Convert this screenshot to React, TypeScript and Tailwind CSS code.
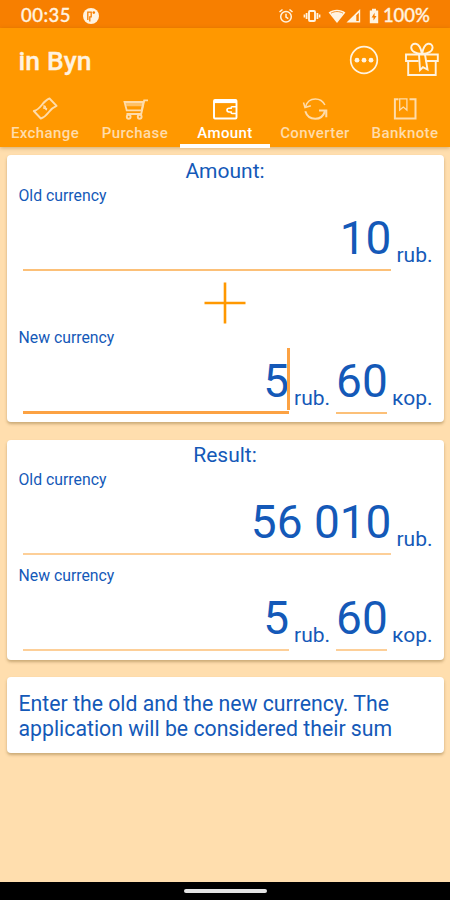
import clsx from 'clsx'
import { ReactNode } from 'react'

const AlarmIcon = () => (
  <svg className="h-4 w-4" viewBox="0 0 16 16" fill="none" stroke="currentColor" strokeWidth="1.5">
    <circle cx="8" cy="8.8" r="5.3" />
    <path d="M8 5.8v3.4l2.3 1.4M1.5 4l3-2.5M14.5 4l-3-2.5" />
  </svg>
)

const VibrationIcon = () => (
  <svg className="h-4 w-[18px]" viewBox="0 0 18 16" fill="none" stroke="currentColor">
    <rect x="6" y="3" width="6" height="10" rx="1" strokeWidth="1.9" />
    <path d="M3.6 5v6M14.4 5v6" strokeWidth="1.8" />
    <path d="M1.4 6.5v3M16.6 6.5v3" strokeWidth="1.6" />
  </svg>
)

const WifiIcon = () => (
  <svg className="h-4 w-[18px]" viewBox="0 0 18 16" fill="currentColor">
    <path d="M9 15 .6 4.6C5.5.8 12.5.8 17.4 4.6Z" />
    <path d="M3 5.2c4-2.2 8-2.2 12 0" stroke="#f77f00" strokeWidth="0.8" fill="none" />
  </svg>
)

const SignalIcon = () => (
  <svg className="h-4 w-[15px]" viewBox="0 0 15 16">
    <path d="M.5 14.5 14.2 1v13.5Z" fill="currentColor" />
    <path d="M10.3 7.2 12.8 4.7v8.4h-2.5Z" fill="#f77f00" />
  </svg>
)

const BatteryIcon = () => (
  <svg className="h-4 w-[10px]" viewBox="0 0 10 16">
    <path d="M3 .8h4v1.6h2.2v12.8H.8V2.4H3Z" fill="currentColor" />
    <path d="M5.6 4.8 2.6 9.4h1.9v3.2l3-4.6H5.6Z" fill="#f77f00" />
  </svg>
)

const AppBadgeIcon = () => (
  <svg className="h-4 w-4" viewBox="0 0 16 16">
    <circle cx="8" cy="8" r="8" fill="currentColor" />
    <path d="M4.8 12V4.2h3.4v4.600H6.800v4.600" stroke="#f77f00" strokeWidth="1.3" fill="none" />
    <circle cx="10.8" cy="4.6" r="1.3" fill="#f77f00" />
  </svg>
)

const MoreIcon = () => (
  <svg className="h-[30px] w-[30px]" viewBox="0 0 30 30" fill="none" stroke="currentColor">
    <circle cx="15" cy="15" r="13.3" strokeWidth="1.7" />
    <g fill="currentColor" stroke="none">
      <circle cx="8" cy="15.2" r="2.4" />
      <circle cx="15" cy="15.2" r="2.4" />
      <circle cx="22" cy="15.2" r="2.4" />
    </g>
  </svg>
)

const GiftIcon = () => (
  <svg
    className="h-[36px] w-[36px]"
    viewBox="0 0 36 36"
    fill="none"
    stroke="currentColor"
    strokeWidth="1.9"
  >
    <path d="M14.6 19H2v-6.5h31.8V19H21.5" />
    <path d="M4.2 19v14h27.5V19" />
    <path d="M18 12C12 11.8 7.2 9.4 7.2 5.6 7.2 2.8 9.4 1.4 11.7 1.8 15 2.4 17 6.5 18 12Z" />
    <path d="M18 12c6-.2 10.6-2.6 10.6-6.4 0-2.8-2.2-4.2-4.5-3.8C21 2.4 19 6.5 18 12Z" />
    <path d="m15 12.5 1 15.7 3-3 4.5 2.3-2.5-15" />
  </svg>
)

const BillIcon = () => (
  <svg className="h-[26px] w-[28px]" viewBox="0 0 28 26" fill="none" stroke="currentColor">
    <path
      d="M2.8 15C6 14.4 8.4 12 10.8 9 13 6.200 15.200 3.700 18.5 2.5L25.600 9.800c-3.600 1.400-5.700 3.500-7.900 6.400-2.300 3-4.600 5.300-7.900 6.300Z"
      strokeWidth="1.900"
      strokeLinejoin="round"
    />
    <path d="M12.300 10.300c1-.4 2 0 2.100 1.200.1 1.300.5 2 1.600 2.200M12.100 11.700l4 1.300" strokeWidth="1.600" />
  </svg>
)

const CartIcon = () => (
  <svg className="h-[26px] w-[28px]" viewBox="0 0 28 26" fill="none" stroke="currentColor">
    <path d="M27 4.4h-3.8L20.2 18H5.5" strokeWidth="1.9" />
    <path d="M22.5 6H3.5l2.2 8.3h15Z" strokeWidth="1.8" />
    <path d="M4 6.5h18l-.9 3.8H5Z" fill="currentColor" fillOpacity="0.6" stroke="none" />
    <circle cx="7.7" cy="20.8" r="1.9" strokeWidth="1.9" />
    <circle cx="18.7" cy="20.8" r="1.9" strokeWidth="1.9" />
  </svg>
)

const WalletIcon = () => (
  <svg className="h-[26px] w-[28px]" viewBox="0 0 28 26" fill="none" stroke="currentColor">
    <rect x="3" y="4" width="22.5" height="18.5" rx="1" strokeWidth="1.9" />
    <path d="M3 6h22.500" strokeWidth="2.2" />
    <path
      d="M25.500 10.800H21c-.7 0-.9.5-.9 1.400H18c-1.400 0-2 .8-2 1.900s.6 1.900 2 1.900h2.100c0 1 .2 1.500.9 1.500h4.500"
      strokeWidth="1.600"
    />
  </svg>
)

const SyncIcon = () => (
  <svg className="h-[26px] w-[28px]" viewBox="0 0 28 26" fill="none" stroke="currentColor">
    <path d="M4.5 11C5.7 6 9.5 3 14.4 3c4.2 0 7.6 2.2 9.5 6" strokeWidth="1.5" />
    <path d="M2.5 6.5 4 11.5l5.800-1.700" strokeWidth="1.5" />
    <path d="M4.3 15.3c1.5 4.9 5.4 7.5 10 7.5 4.7 0 8.2-2.8 9.7-7.7" strokeWidth="2" />
    <path d="M18 14.500h7.300v6.700" strokeWidth="2" />
  </svg>
)

const BookIcon = () => (
  <svg className="h-[26px] w-[28px]" viewBox="0 0 28 26" fill="none" stroke="currentColor">
    <path d="M7.5 3.3H3.9v19.3h20.6V3.3h-6" strokeWidth="2" />
    <path d="M8.7 2.8V14l3.6-3 3.6 3V2.8Z" strokeWidth="1.3" />
  </svg>
)

const tabs = [
  { label: 'Exchange', icon: <BillIcon /> },
  { label: 'Purchase', icon: <CartIcon /> },
  { label: 'Amount', icon: <WalletIcon />, active: true },
  { label: 'Converter', icon: <SyncIcon /> },
  { label: 'Banknote', icon: <BookIcon /> },
]

type CardProps = {
  children: ReactNode
  className?: string
}

const Card = ({ children, className }: CardProps) => (
  <section
    className={clsx('rounded-[4px] bg-white shadow-[0_2px_3px_rgba(90,60,0,0.32)]', className)}
  >
    {children}
  </section>
)

const CardTitle = ({ children }: { children: ReactNode }) => (
  <h2 className="h-8 text-center text-[21px] leading-8">{children}</h2>
)

const Label = ({ children }: { children: ReactNode }) => (
  <div className="h-[18px] pl-3 text-[15.8px] leading-[18px]">{children}</div>
)

type FieldProps = {
  value: string
  unit: string
  small?: boolean
  focused?: boolean
  variant?: 'input' | 'output'
}

const Field = ({ value, unit, small, focused, variant = 'input' }: FieldProps) => (
  <div className={clsx('flex items-end', small ? 'ml-[6px]' : 'flex-1')}>
    <div
      className={clsx(
        'relative h-[66px] text-right text-[46px] leading-[66px] whitespace-nowrap',
        small ? 'w-[51px]' : 'flex-1',
        focused
          ? 'border-b-[3px] border-[#fca243]'
          : variant === 'output'
            ? 'border-b-2 border-[#fdcf98]'
            : 'border-b-2 border-[#fcc078]'
      )}
    >
      {value}
      {focused && <span className="absolute top-0 right-[-1px] h-[62px] w-[3px] bg-[#fca243]" />}
    </div>
    <span className="ml-[5px] text-[21px] leading-8">{unit}</span>
  </div>
)

export default function App() {
  return (
    <div className="flex h-[900px] w-[450px] flex-col overflow-hidden bg-[#ffdeae] font-['Roboto',sans-serif] text-[#1459b8]">
      <div className="flex h-7 shrink-0 items-center bg-[#f77f00] pt-[3px] pr-[20px] pl-[21px] font-['Lato',sans-serif] text-[18.5px] font-medium text-[#fff3e0]">
        <span className="tracking-[0.5px] [-webkit-text-stroke:0.3px_currentColor]">00:35</span>
        <span className="ml-[12px]">
          <AppBadgeIcon />
        </span>
        <div className="ml-auto flex items-center">
          <AlarmIcon />
          <span className="ml-[9px]">
            <VibrationIcon />
          </span>
          <span className="ml-[7px]">
            <WifiIcon />
          </span>
          <SignalIcon />
          <span className="ml-[8px]">
            <BatteryIcon />
          </span>
          <span className="ml-[4px] [-webkit-text-stroke:0.3px_currentColor]">100%</span>
        </div>
      </div>

      <header className="h-[119px] shrink-0 bg-[#ff9800] text-[#fff3e0] shadow-[0_1px_4px_rgba(120,80,0,0.35)]">
        <div className="flex h-16 items-center pr-[10px] pl-[18.5px]">
          <h1 className="pt-[2px] text-[26.5px] font-medium tracking-[0.1px] [-webkit-text-stroke:0.3px_currentColor]">
            in Byn
          </h1>
          <span className="ml-auto">
            <MoreIcon />
          </span>
          <span className="ml-[25px]">
            <GiftIcon />
          </span>
        </div>
        <nav className="grid h-[55px] grid-cols-5">
          {tabs.map(tab => (
            <div
              key={tab.label}
              className={clsx(
                'flex flex-col items-center border-b-4 pt-1',
                tab.active ? 'border-white text-white' : 'border-transparent text-[#ffdcaa]'
              )}
            >
              {tab.icon}
              <span className="text-[15px] leading-[22px] font-medium tracking-[0.4px]">
                {tab.label}
              </span>
            </div>
          ))}
        </nav>
      </header>

      <main className="flex flex-1 flex-col gap-[17.5px] px-[6.5px] pt-2">
        <Card className="pb-[8px]">
          <CardTitle>Amount:</CardTitle>
          <Label>Old currency</Label>
          <div className="flex pr-[11px] pl-4">
            <Field value="10" unit="rub." />
          </div>
          <div className="flex h-[58px] items-center justify-center pt-[6px] text-[#ff9800]">
            <svg className="h-[42px] w-[42px]" viewBox="0 0 42 42" stroke="currentColor">
              <path d="M21 .5v41M.5 21h41" strokeWidth="2.6" />
            </svg>
          </div>
          <Label>New currency</Label>
          <div className="flex pt-px pr-[11px] pl-4">
            <Field value="5" unit="rub." focused />
            <Field value="60" unit="кор." small />
          </div>
        </Card>

        <Card className="pb-[9px]">
          <div className="-mt-px">
            <CardTitle>Result:</CardTitle>
          </div>
          <Label>Old currency</Label>
          <div className="mb-3 flex pr-[11px] pl-4">
            <Field value="56 010" unit="rub." variant="output" />
          </div>
          <Label>New currency</Label>
          <div className="flex pr-[11px] pl-4">
            <Field value="5" unit="rub." variant="output" />
            <Field value="60" unit="кор." variant="output" small />
          </div>
        </Card>

        <Card className="px-3 pt-[14px] pb-3 text-[21.25px] leading-[25px]">
          Enter the old and the new currency. The application will be considered their sum
        </Card>
      </main>

      <footer className="flex h-[18px] shrink-0 items-center justify-center bg-black">
        <div className="h-1 w-[83px] rounded-full bg-[#e4e4e4]" />
      </footer>
    </div>
  )
}
